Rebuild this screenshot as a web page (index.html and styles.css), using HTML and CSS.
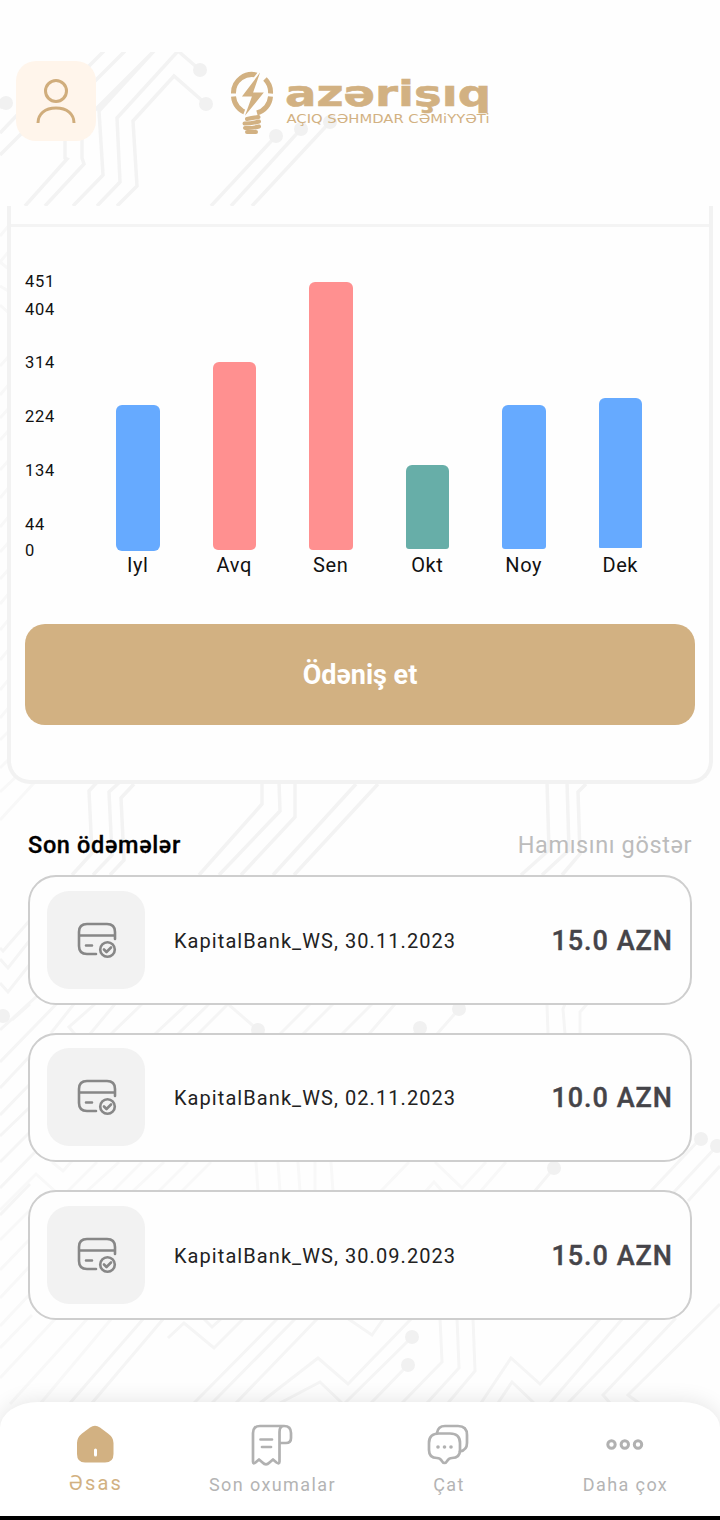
FILE: index.html
```html
<!DOCTYPE html>
<html lang="az">
<head>
<meta charset="utf-8">
<meta name="viewport" content="width=720">
<title>Azərişıq</title>
<link rel="stylesheet" href="styles.css">
</head>
<body>
<svg class="circuit" viewBox="0 0 720 1520" aria-hidden="true">
  <defs><clipPath id="below-status"><rect x="0" y="52" width="720" height="154"/></clipPath></defs>
  <g class="trace" clip-path="url(#below-status)">
    <path d="M104 51L0 155M125 51L65 111V158L67 159L25 206M154 51L82 123V158L84 164L45 206M0 133L20 112M154 51L99 111L103 175L73 206M178 51L117 118L120 182L97 206M178 51L200 70M206 104L174 76L133 121L137 186L117 206M276 136L211 206M301 129L231 206M330 122L252 206M0 108L6 103"/>
    <g class="node"><circle cx="200" cy="70" r="7"/><circle cx="206" cy="104" r="7"/><circle cx="6" cy="103" r="7"/><circle cx="276" cy="136" r="7"/><circle cx="301" cy="129" r="7"/><circle cx="330" cy="122" r="7"/></g>
  </g>
  <g class="trace faint">
    <path d="M0 236L10 224M0 262L10 250M0 262L10 270M0 286L10 292M0 305L10 314M0 366L10 355M0 395L10 383M0 418L10 407M0 440L10 429M0 470L10 459M0 498L10 486M0 527L10 515M0 552L10 541M0 579L10 568M0 604L10 592M0 630L10 618M0 660L10 648M0 690L10 678M0 718L10 706M0 740L12 728M0 768L10 758M0 792L18 775M0 820L34 783"/>
  </g>
  <g class="trace">
    <path d="M99 780L89 791L92 853L72 875M122 780L109 792L112 855L93 875M134 784L121 798L124 860L110 875M262 782V804L199 875M279 782L280 811L219 875M295 782V817L241 875M356 784L273 875M378 784L294 875M547 782L549 850L521 875M567 782L569 850L542 875M586 784L578 792L580 854L562 875"/>
  </g>
  <g class="trace mid">
    <path d="M30 920L3 951L0 948M30 940L8 968L0 959M30 964L8 992L0 983M0 1030L50 984M0 1062L68 992M0 1088L30 1056M0 1115L30 1084M0 1136L30 1107M0 1162L30 1132M0 1188L37 1150M0 1215L30 1184M12 1020L30 1004M74 1004L51 1033M95 1004L69 1027L78 1038M115 1004L90 1034M142 1004L111 1034M187 1004L155 1034M209 1004L178 1034M258 1030L228 1004L198 1034M310 1004L280 1034M333 1004L303 1034M372 1004L342 1034M395 1004L369 1034M420 1028L414 1034M459 1009L437 1034M547 1004L548 1034M565 1004L563 1009L565 1034M587 1004L580 1012V1034"/>
    <g class="node"><circle cx="3" cy="1016" r="7"/><circle cx="258" cy="1030" r="7"/><circle cx="420" cy="1028" r="7"/><circle cx="459" cy="1009" r="7"/></g>
  </g>
  <g class="trace faint">
    <path d="M52 1162L63 1171L72 1161M0 1210L36 1174L56 1192M97 1162L67 1192M119 1162L86 1192M142 1162L112 1192M164 1162L132 1192M188 1162L158 1192M211 1162L181 1192M256 1162L258 1192M278 1162L280 1192M298 1162L300 1192M315 1162V1192M331 1162L333 1192M409 1162L380 1192M435 1162L462 1188L486 1162M425 1192L434 1182L443 1192M506 1162L480 1192M0 1240L30 1210M0 1270L30 1239M0 1298L30 1266M0 1326L30 1294M0 1348L32 1315M0 1378L56 1318M10 1404L88 1318M40 1404L112 1318"/>
  </g>
  <g class="trace mid">
    <path d="M554 1168L534 1192M700 1139L650 1192M717 1146L674 1192M720 1166L688 1201M720 1304L628 1395L639 1403"/>
    <g class="node"><circle cx="554" cy="1168" r="7"/><circle cx="701" cy="1139" r="7"/><circle cx="717" cy="1146" r="7"/></g>
    <path d="M144 1318L70 1403M164 1318L92 1403M278 1318L194 1403M168 1338L184 1323L214 1348L244 1318M203 1318L212 1327L222 1318M296 1318L212 1403M318 1318L236 1403M347 1318L372 1335L384 1318M260 1403L318 1358L348 1384L412 1318M280 1403L320 1382L342 1403M412 1337L345 1403M408 1365L371 1403M440 1318L442 1362L402 1403M457 1318L459 1368L427 1403M473 1318L475 1371L448 1403M481 1403L511 1358L540 1384L601 1318M498 1403L512 1382L534 1403M623 1318L550 1403M650 1318L568 1403M676 1318L603 1395L610 1403"/>
    <g class="node"><circle cx="412" cy="1337" r="7"/><circle cx="408" cy="1365" r="7"/></g>
  </g>
</svg>

<div class="app">
  <header class="header">
    <button class="profile" aria-label="Profil">
      <svg width="40" height="46" viewBox="0 0 40 46"><circle cx="20" cy="13" r="10.500"/><path d="M2 45C2 36 9 30 20 30S38 36 38 45"/></svg>
    </button>
    <svg class="logo" width="260" height="68" viewBox="0 0 260 68">
      <g class="bulb">
        <path class="ring" d="M3.500 25.500A18.500 18.500 0 0 1 28 7.500M35 11A18.500 18.500 0 0 1 40.500 25.500M3.500 28.500A18.500 18.500 0 0 0 17 45M40.500 28.500A18.500 18.500 0 0 1 27 45"/>
        <path class="bolt" d="M33 -1L10 29.500H20.500L12 53L36 23.500H24.500Z"/>
        <path class="base" d="M17 51Q22 50 28.500 49M14.500 55.500Q22 55.500 29 53.500M15 60Q22 60.500 29 58.500M17 64H26"/>
      </g>
      <text class="wordmark" x="55" y="38" textLength="206" lengthAdjust="spacingAndGlyphs">azərişıq</text>
      <text class="tagline" x="56.500" y="55" textLength="203" lengthAdjust="spacingAndGlyphs">AÇIQ SƏHMDAR CƏMiYYƏTi</text>
    </svg>
  </header>

  <section class="usage">
    <div class="chart">
      <div class="axis"><span>451</span><span class="r404">404</span><span class="r314">314</span><span class="r224">224</span><span class="r134">134</span><span class="r44">44</span><span class="r0">0</span></div>
      <div class="bars">
        <div class="col"><div class="slot"><i class="bar blue r7" style="height:146px"></i></div><b>Iyl</b></div>
        <div class="col"><div class="slot lift1"><i class="bar red r6" style="height:188px"></i></div><b>Avq</b></div>
        <div class="col"><div class="slot lift2"><i class="bar red r5" style="height:267.500px"></i></div><b>Sen</b></div>
        <div class="col"><div class="slot lift3"><i class="bar green r4" style="height:84px"></i></div><b>Okt</b></div>
        <div class="col"><div class="slot lift4"><i class="bar blue r3" style="height:143.500px"></i></div><b>Noy</b></div>
        <div class="col"><div class="slot lift5"><i class="bar blue r2" style="height:149.500px"></i></div><b>Dek</b></div>
      </div>
    </div>
    <button class="pay">Ödəniş et</button>
  </section>

  <section class="payments">
    <div class="head"><h2>Son ödəmələr</h2><a>Hamısını göstər</a></div>
    <article class="payment">
      <div class="thumb"><svg width="40" height="38" viewBox="0 0 40 38"><path d="M38 17V10Q38 2 30 2H10Q2 2 2 10V24Q2 32 10 32H19M2 13.500H38M9 23.500H15"/><circle cx="30.500" cy="27.500" r="7.300"/><path d="M27 27.500L29.500 30L34 25.500"/></svg></div>
      <p>KapitalBank_WS, 30.11.2023</p><strong>15.0 AZN</strong>
    </article>
    <article class="payment">
      <div class="thumb"><svg width="40" height="38" viewBox="0 0 40 38"><path d="M38 17V10Q38 2 30 2H10Q2 2 2 10V24Q2 32 10 32H19M2 13.500H38M9 23.500H15"/><circle cx="30.500" cy="27.500" r="7.300"/><path d="M27 27.500L29.500 30L34 25.500"/></svg></div>
      <p>KapitalBank_WS, 02.11.2023</p><strong>10.0 AZN</strong>
    </article>
    <article class="payment">
      <div class="thumb"><svg width="40" height="38" viewBox="0 0 40 38"><path d="M38 17V10Q38 2 30 2H10Q2 2 2 10V24Q2 32 10 32H19M2 13.500H38M9 23.500H15"/><circle cx="30.500" cy="27.500" r="7.300"/><path d="M27 27.500L29.500 30L34 25.500"/></svg></div>
      <p>KapitalBank_WS, 30.09.2023</p><strong>15.0 AZN</strong>
    </article>
  </section>

  <nav class="tabs">
    <a class="tab active">
      <svg width="42" height="42" viewBox="0 0 42 42"><path class="house" d="M16 3.500Q21 0 26 3.500L34 9.500Q39.500 13.500 39.500 19V30Q39.500 38.500 31 38.500H11Q3 38.500 3 30V19Q3 13.500 8 9.500Z"/><path class="door" d="M21.500 26V31"/></svg>
      <span>Əsas</span>
    </a>
    <a class="tab">
      <svg width="42" height="42" viewBox="0 0 42 42"><path d="M28.500 37.500V8Q28.500 2 33 2H9Q2 2 2 9V37.500Q2 40.500 4.500 38.500L8 35.500L11.500 38.500Q15 42 18.500 38.500L22 35.500L25.500 38.500Q28.500 40.500 28.500 37.500M33 2Q40 2 40 9V14Q40 19 35 19H28.500M9.500 15.500H21M11 23H20"/></svg>
      <span>Son oxumalar</span>
    </a>
    <a class="tab">
      <svg width="42" height="42" viewBox="0 0 42 42"><path d="M10 9Q11 2 18 2H31Q40 2 40 11V19Q40 26 33 27.500"/><path d="M12 9.500H23Q33 9.500 33 19V26Q33 34 25 34Q22 34 20.500 36.500Q17.500 41.500 14.500 36.500Q13 34 10 34Q2 34 2 26V19Q2 9.500 12 9.500Z"/><g class="dots"><circle cx="11" cy="23" r="1.800"/><circle cx="17.500" cy="23" r="1.800"/><circle cx="24" cy="23" r="1.800"/></g></svg>
      <span>Çat</span>
    </a>
    <a class="tab">
      <svg width="42" height="42" viewBox="0 0 42 42"><g class="rings"><circle cx="7.500" cy="20.500" r="3.700"/><circle cx="20.800" cy="20.500" r="3.700"/><circle cx="34" cy="20.500" r="3.700"/></g></svg>
      <span>Daha çox</span>
    </a>
  </nav>
</div>
</body>
</html>
```
FILE: styles.css
```css
* { box-sizing: border-box; }
body { margin: 0; width: 720px; height: 1520px; overflow: hidden; background: #fefefe; font-family: Roboto, "Noto Sans", sans-serif; }
button { border: 0; padding: 0; font-family: inherit; }
h2, p { margin: 0; }

.circuit { position: absolute; left: 0; top: 0; width: 720px; height: 1520px; }
.trace { fill: none; stroke: #f3f3f3; stroke-width: 3.500; }
.trace.mid { stroke: #f5f5f5; stroke-width: 3; }
.trace.faint { stroke: #f8f8f8; stroke-width: 3; }
.node { fill: #f1f1f1; stroke: none; }

.app { position: relative; display: flex; flex-direction: column; width: 720px; height: 1520px; border-bottom: 4px solid #000; }

.header { display: flex; align-items: flex-start; height: 206px; padding: 61px 0 0 16px; flex: none; }
.profile { display: flex; align-items: center; justify-content: center; width: 80px; height: 80px; border-radius: 20px; background: #fff5eb; }
.profile svg { fill: none; stroke: #d0ad7c; stroke-width: 3; }
.logo { margin: 7px 0 0 134px; overflow: visible; }
.bulb { fill: none; stroke: #d2b182; }
.ring { stroke-width: 5; }
.bulb .bolt { fill: #d2b182; stroke: #fefefe; stroke-width: 2; }
.base { stroke-width: 4; stroke-linecap: round; }
.wordmark { font: 700 36px "DejaVu Sans", sans-serif; fill: #d2b182; stroke: #d2b182; stroke-width: .6px; }
.tagline { font: 400 11.500px "DejaVu Sans", sans-serif; fill: #d2b182; }

.usage { flex: none; width: 706px; height: 578px; margin: 0 7px; padding-top: 18px; border: 4px solid #f2f2f2; border-top: 0; border-radius: 0 0 23px 23px; background: #fefefe; }
.chart { display: flex; height: 400px; padding: 44px 0 0 14px; border-top: 3px solid #f4f4f4; }
.axis { display: flex; flex-direction: column; width: 64.500px; padding-top: 1px; font-size: 16.500px; line-height: 20px; letter-spacing: .7px; color: #111; }
.r404 { margin-top: 8px; }
.r314 { margin-top: 33px; }
.r224, .r134, .r44 { margin-top: 34px; }
.r0 { margin-top: 6px; }
.bars { display: flex; }
.col { width: 96.500px; text-align: center; }
.slot { display: flex; align-items: flex-end; justify-content: center; height: 279.500px; }
.lift1 { padding-bottom: .5px; }
.lift2 { padding-bottom: 1px; }
.lift3 { padding-bottom: 1.500px; }
.lift4 { padding-bottom: 2px; }
.lift5 { padding-bottom: 3px; }
.bar { width: 43.500px; }
.blue { background: #66aaff; }
.red { background: #ff9090; }
.green { background: #67aea8; }
.r7 { border-radius: 6px; }
.r6 { border-radius: 6px 6px 5px 5px; }
.r5 { border-radius: 6px 6px 4px 4px; }
.r4, .r3 { border-radius: 6px 6px 3px 3px; }
.r2 { border-radius: 6px 6px 1px 1px; }
.col b { display: block; font-weight: 400; font-size: 20px; line-height: 24px; letter-spacing: .6px; color: #111; margin-top: 2px; }
.pay { display: block; width: 670px; height: 101px; margin: 0 0 0 14px; border-radius: 20px; background: #d2b182; color: #fff; font-size: 27px; font-weight: 700; }

.payments { padding: 46px 28px 0; flex: none; }
.head { display: flex; justify-content: space-between; align-items: center; height: 30px; margin-bottom: 15px; }
.head h2 { font-size: 23.500px; font-weight: 500; letter-spacing: .65px; color: #000; -webkit-text-stroke: .3px #000; }
.head a { font-size: 23.500px; letter-spacing: .6px; color: #bcbcbc; }
.payment { display: flex; align-items: center; height: 129.500px; margin-bottom: 28px; padding: 0 17px; border: 2px solid #cecece; border-radius: 28px; background: #fefefe; }
.thumb { display: flex; align-items: center; justify-content: center; width: 98px; height: 98px; padding: 2px 0 0 1px; border-radius: 22px; background: #f2f2f2; }
.thumb svg { fill: none; stroke: #878787; stroke-width: 2.600; stroke-linecap: round; stroke-linejoin: round; }
.payment p { margin-left: 29px; padding-top: 2px; font-size: 20px; letter-spacing: 1.070px; color: #222; flex: 1; white-space: nowrap; }
.payment strong { padding-top: 2px; font-size: 27px; font-weight: 500; letter-spacing: 1px; color: #454449; -webkit-text-stroke: .4px #454449; }

.tabs { display: flex; height: 114px; margin-top: auto; border-radius: 38px 38px 0 0 / 26px 26px 0 0; background: #fff; box-shadow: 0 0 22px rgba(0, 0, 0, .11); padding: 0 7px; }
.tab { display: flex; flex-direction: column; align-items: center; flex: 1; padding-top: 22px; color: #b4b4b4; font-size: 18px; letter-spacing: 1.400px; }
.tab span { line-height: 22px; margin-top: 8px; padding-left: 1.500px; }
.tab svg { fill: none; stroke: #b1b1b1; stroke-width: 2.700; stroke-linecap: round; stroke-linejoin: round; }
.tab .dots { fill: #b1b1b1; stroke: none; }
.tab .rings { stroke-width: 3; }
.tab .house { fill: #d2b182; stroke: none; }
.tab .door { stroke: #fff; stroke-width: 3; }
.tab.active { color: #d2b182; font-size: 20px; letter-spacing: 2.200px; }
.tab.active span { margin-top: 6px; }
```
